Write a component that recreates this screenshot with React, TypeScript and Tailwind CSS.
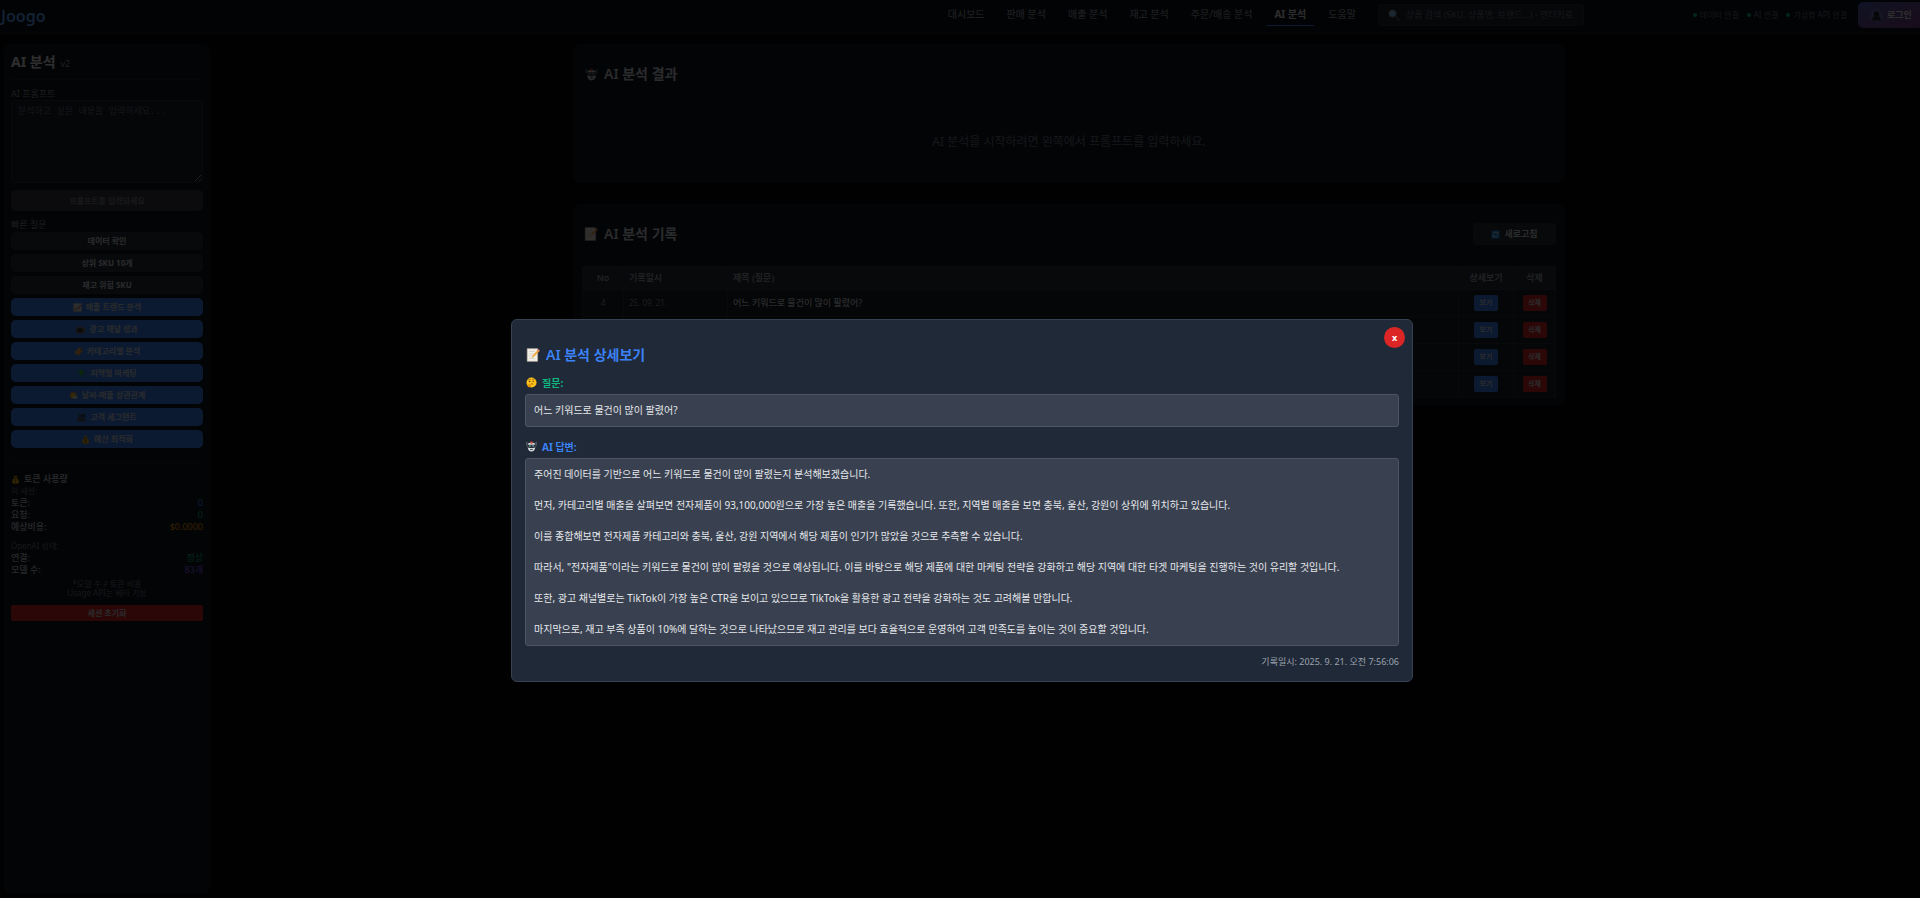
import type { ReactNode } from 'react'

type IconProps = { className?: string }

function Svg({ className = 'size-3', children }: { className?: string; children: ReactNode }) {
  return (
    <svg viewBox="0 0 24 24" className={`shrink-0 ${className}`} aria-hidden="true">
      {children}
    </svg>
  )
}

function MemoIcon({ className }: IconProps) {
  return (
    <Svg className={className}>
      <path d="M2 1h18v22H2z" fill="#f3efe6" stroke="#a8a29a" strokeWidth="1" />
      <path d="M5 6h10M5 10h8M5 14h6M5 18h10" stroke="#cfcbc4" strokeWidth="1.2" />
      <path d="M10 17l1.200-4.200L21 2.500l2.500 2.300L13.800 15.200z" fill="#f2a93b" />
      <path d="M10 17l1.200-4.200 2.600 2.400z" fill="#e8c9a0" />
      <path d="M19.500 4l1.800-2 2.500 2.400-1.800 2z" fill="#e8746a" />
    </Svg>
  )
}

function ThinkingIcon({ className }: IconProps) {
  return (
    <Svg className={className}>
      <circle cx="12" cy="12" r="11" fill="#fcc21b" />
      <circle cx="8" cy="10" r="1.600" fill="#4a3413" />
      <circle cx="15.500" cy="9" r="1.600" fill="#4a3413" />
      <path d="M5 6.500q3-2 5.500-.5M13.500 5q2.500-2 5 0M10 16q3-2.500 6-.5" fill="none" stroke="#6b4a17" strokeWidth="1.500" />
      <path d="M4 22c-1-4 1-6 2.500-6l5-.5c1.500.5 1 2-1 2.300 1.500 1.500.5 4-2.500 4.700z" fill="#e59600" />
    </Svg>
  )
}

function RobotIcon({ className }: IconProps) {
  return (
    <Svg className={className}>
      <path d="M2 2v8M22 2v8" stroke="#8d9499" strokeWidth="1.500" />
      <path d="M5 5q7-3 14 0l1.500 8q-1.500 10-8.500 10T3.500 13z" fill="#d5d9dc" />
      <path d="M10 1h4v5h-4z" fill="#e2453c" />
      <path d="M3.500 8h17v6q-8.500 3-17 0z" fill="#2b3338" />
      <circle cx="8.500" cy="11" r="1.500" fill="#7fe3e8" />
      <circle cx="15.500" cy="11" r="1.500" fill="#7fe3e8" />
      <path d="M9 18.500h6" stroke="#3b4349" strokeWidth="2" />
    </Svg>
  )
}

function ChartIcon({ className }: IconProps) {
  return (
    <Svg className={className}>
      <path d="M1 1h22v22H1z" fill="#e6e7e8" stroke="#9aa0a6" />
      <path d="M8 1v22M16 1v22M1 8h22M1 16h22" stroke="#b5bcc2" />
      <path d="M3 20l6-7 4 3 8-11" fill="none" stroke="#e0453a" strokeWidth="2.600" />
    </Svg>
  )
}

function TvIcon({ className }: IconProps) {
  return (
    <Svg className={className}>
      <path d="M7 1l5 5 5-5" fill="none" stroke="#8a8a8a" strokeWidth="1.600" />
      <rect x="1" y="6" width="22" height="16" rx="2" fill="#7a5b48" />
      <rect x="4" y="9" width="13" height="10" fill="#2d3135" />
      <circle cx="20" cy="11" r="1.300" fill="#d6c9bd" />
    </Svg>
  )
}

function TagIcon({ className }: IconProps) {
  return (
    <Svg className={className}>
      <path d="M13 2l8 1 2 8-12 12L1 14z" fill="#f0a94e" />
      <circle cx="18" cy="7" r="2" fill="#5a3310" />
      <path d="M6 13l5-5M9 17l6-6" stroke="#b56d24" strokeWidth="1.500" />
    </Svg>
  )
}

function GlobeIcon({ className }: IconProps) {
  return (
    <Svg className={className}>
      <circle cx="12" cy="12" r="11" fill="#2487c9" />
      <path d="M5 5q6-5 13-1l1 6-5 3-1 7-4-2-1-6-4-2z" fill="#33b44a" />
    </Svg>
  )
}

function SunCloudIcon({ className }: IconProps) {
  return (
    <Svg className={className}>
      <path d="M11 0l2 4 4-2v5l5 1-3 4 3 4-5 1v5l-5-3-5 3-1-5-5-1 3-4-3-4 5-1V2l4 2z" fill="#f5a623" />
      <circle cx="11" cy="12" r="6" fill="#fdd235" />
      <path d="M11 20q-3-4 2-6 3-4 6 0 5 1 4 6z" fill="#e4eaee" />
    </Svg>
  )
}

function PeopleIcon({ className }: IconProps) {
  return (
    <Svg className={className}>
      <circle cx="8" cy="8" r="5" fill="#4b5058" />
      <circle cx="17" cy="7" r="5" fill="#3a3f46" />
      <path d="M0 22q0-9 8-9 4 0 5 2 2-2 5-2 6 1 6 9z" fill="#4b5058" />
    </Svg>
  )
}

function MoneyBagIcon({ className }: IconProps) {
  return (
    <Svg className={className}>
      <path d="M7 1l5 2 5-2-2 6H9z" fill="#f2b600" />
      <path d="M9 7h6q7 6 6 12-1 4-9 4t-9-4Q2 13 9 7z" fill="#f2b600" />
      <path d="M8 7h8" stroke="#8a5a00" strokeWidth="2" />
      <path d="M15 12q-5-2-5 1t4 2q2 4-5 3M12 10v11" fill="none" stroke="#7a5200" strokeWidth="1.600" />
    </Svg>
  )
}

function RefreshIcon({ className }: IconProps) {
  return (
    <Svg className={className}>
      <rect x="1" y="1" width="22" height="22" rx="2" fill="#1481d4" />
      <path d="M5.500 11a6.500 6.500 0 0 1 12-2.500M18.500 13a6.500 6.500 0 0 1-12 2.500" fill="none" stroke="#e8f4ff" strokeWidth="2.400" />
      <path d="M19.500 4v6h-6zM4.500 20v-6h6z" fill="#e8f4ff" />
    </Svg>
  )
}

function SearchIcon({ className }: IconProps) {
  return (
    <Svg className={className}>
      <path d="M14 14l8 8" stroke="#4a4f55" strokeWidth="4" strokeLinecap="round" />
      <circle cx="9" cy="9" r="7.500" fill="#8cc4e8" stroke="#5d6870" strokeWidth="2" />
    </Svg>
  )
}

function UserIcon({ className }: IconProps) {
  return (
    <Svg className={className}>
      <circle cx="12" cy="12" r="12" fill="#6b6fae" />
      <circle cx="12" cy="9" r="5" fill="#23262e" />
      <path d="M4 21q0-8 8-8t8 8z" fill="#23262e" />
    </Svg>
  )
}

const navItems = ['대시보드', '판매 분석', '매출 분석', '재고 분석', '주문/배송 분석', 'AI 분석', '도움말']
const statuses = ['데이터 연결', 'AI 연결', '기상청 API 연결']
const plainQuestions = ['데이터 확인', '상위 SKU 10개', '재고 위험 SKU']

const analysisQuestions = [
  { label: '매출 트렌드 분석', Icon: ChartIcon },
  { label: '광고 채널 성과', Icon: TvIcon },
  { label: '카테고리별 분석', Icon: TagIcon },
  { label: '지역별 마케팅', Icon: GlobeIcon },
  { label: '날씨-매출 상관관계', Icon: SunCloudIcon },
  { label: '고객 세그먼트', Icon: PeopleIcon },
  { label: '예산 최적화', Icon: MoneyBagIcon },
]

const history = [
  { no: 4, date: '25. 09. 21.', title: '어느 키워드로 물건이 많이 팔렸어?' },
  { no: 3, date: '', title: '' },
  { no: 2, date: '', title: '' },
  { no: 1, date: '', title: '' },
]

const answer = [
  '주어진 데이터를 기반으로 어느 키워드로 물건이 많이 팔렸는지 분석해보겠습니다.',
  '먼저, 카테고리별 매출을 살펴보면 전자제품이 93,100,000원으로 가장 높은 매출을 기록했습니다. 또한, 지역별 매출을 보면 충북, 울산, 강원이 상위에 위치하고 있습니다.',
  '이를 종합해보면 전자제품 카테고리와 충북, 울산, 강원 지역에서 해당 제품이 인기가 많았을 것으로 추측할 수 있습니다.',
  '따라서, "전자제품"이라는 키워드로 물건이 많이 팔렸을 것으로 예상됩니다. 이를 바탕으로 해당 제품에 대한 마케팅 전략을 강화하고 해당 지역에 대한 타겟 마케팅을 진행하는 것이 유리할 것입니다.',
  '또한, 광고 채널별로는 TikTok이 가장 높은 CTR을 보이고 있으므로 TikTok을 활용한 광고 전략을 강화하는 것도 고려해볼 만합니다.',
  '마지막으로, 재고 부족 상품이 10%에 달하는 것으로 나타났으므로 재고 관리를 보다 효율적으로 운영하여 고객 만족도를 높이는 것이 중요할 것입니다.',
]

function Header() {
  return (
    <header className="flex h-[34px] items-start overflow-hidden border-b border-[#161b26] bg-[#0b0f17]">
      <a href="#home" className="ml-px pt-1 text-[16px] leading-6 font-semibold text-[#60a5fa]">
        Joogo
      </a>
      <nav className="ml-auto flex gap-[6px] pt-1">
        {navItems.map((item) => (
          <a
            key={item}
            href={`#${item}`}
            className={
              item === 'AI 분석'
                ? 'border-b border-[#3b82f6] px-2 text-[10px] leading-[21px] font-bold whitespace-nowrap text-gray-200'
                : 'px-2 text-[10px] leading-[21px] font-medium whitespace-nowrap text-[#8b929e]'
            }
          >
            {item}
          </a>
        ))}
      </nav>
      <div className="mt-1 ml-[14px] flex h-[22px] w-[206px] shrink-0 items-center gap-[6px] rounded-[3px] border border-[#2a3040] bg-[#1f2430] px-[9px]">
        <SearchIcon className="size-3" />
        <input
          aria-label="상품 검색"
          placeholder="상품 검색 (SKU, 상품명, 브랜드...) - 엔터키로 검색"
          className="min-w-0 flex-1 bg-transparent text-[9px] leading-4 outline-none placeholder:text-[#6b7280]"
        />
      </div>
      <ul className="ml-[109px] flex gap-2 pt-[5px]">
        {statuses.map((status) => (
          <li key={status} className="flex items-center gap-[3px] text-[8px] leading-5 whitespace-nowrap text-[#6b7280]">
            <span className="size-1 rounded-full bg-[#10b981]" />
            {status}
          </li>
        ))}
      </ul>
      <button className="mt-[2px] -mr-1 ml-[11px] flex h-[26px] w-[66px] shrink-0 items-center gap-1 rounded-[5px] bg-linear-to-br from-[#4f5fb8] to-[#7a3a80] pl-3 text-[9px] font-bold text-gray-200">
        <UserIcon className="size-[13px]" />
        로그인
      </button>
    </header>
  )
}

function StatRow({ label, value, tone }: { label: string; value: string; tone: string }) {
  return (
    <div className="flex justify-between text-[9px] leading-[12px]">
      <dt className="font-medium text-[#c0c5cd]">{label}</dt>
      <dd className={tone}>{value}</dd>
    </div>
  )
}

function Sidebar() {
  return (
    <aside className="ml-1 w-[206px] shrink-0 rounded-lg bg-[#131720] px-[7px] pt-2">
      <h2 className="flex items-baseline gap-[5px] border-b border-[#1e2430] pb-[5px] text-[14px] leading-5 font-bold text-gray-200">
        AI 분석 <small className="text-[9px] font-normal text-gray-400">v2</small>
      </h2>
      <label htmlFor="prompt" className="mt-2 block text-[9px] leading-[12px] text-[#8b929e]">
        AI 프롬프트
      </label>
      <textarea
        id="prompt"
        placeholder="분석하고 싶은 내용을 입력하세요..."
        className="block h-[83px] w-full rounded-[3px] border border-[#262d3a] bg-[#191e29] px-[6px] py-1 font-['Liberation_Mono','Noto_Sans_CJK_KR',monospace] text-[9px] leading-[14px] placeholder:text-[#6b7280]"
      />
      <button disabled className="mt-[7px] h-[21px] w-full rounded-[5px] bg-[#383b42] text-[8px] font-bold text-[#777c86]">
        프롬프트를 입력하세요
      </button>
      <h3 className="mt-2 text-[9px] leading-[12px] text-[#8b929e]">빠른 질문</h3>
      <div className="mt-px flex flex-col gap-1">
        {plainQuestions.map((label) => (
          <button key={label} className="h-[18px] rounded-[5px] border border-[#303540] bg-[#2b2f38] text-[8px] font-bold text-[#d1d5db]">
            {label}
          </button>
        ))}
        {analysisQuestions.map(({ label, Icon }) => (
          <button key={label} className="flex h-[18px] items-center justify-center gap-1 rounded-[5px] bg-[#3b82f6] text-[8px] font-bold text-[#d1d5db]">
            <Icon className="size-[9px]" />
            {label}
          </button>
        ))}
      </div>
      <section className="mt-[14px] border-t border-[#1e2430] pt-[10px]">
        <h3 className="flex items-center gap-1 text-[9px] leading-[12px] font-bold text-[#b4b9c2]">
          <MoneyBagIcon className="size-[9px]" />
          토큰 사용량
        </h3>
        <p className="text-[8px] leading-[12px] text-[#6b7280]">이 세션:</p>
        <dl>
          <StatRow label="토큰:" value="0" tone="text-[#3b82f6]" />
          <StatRow label="요청:" value="0" tone="text-[#10b981]" />
          <StatRow label="예상비용:" value="$0.0000" tone="text-[#f59e0b]" />
        </dl>
        <p className="mt-[7px] text-[8px] leading-[12px] text-[#6b7280]">OpenAI 상태:</p>
        <dl>
          <StatRow label="연결:" value="정상" tone="text-[#10b981]" />
          <StatRow label="모델 수:" value="83개" tone="text-[#8b5cf6]" />
        </dl>
        <p className="mt-[3px] text-center text-[8px] leading-[9px] text-[#6b7280]">
          *모델 수 ≠ 토큰 비용
          <br />
          Usage API는 베타 기능
        </p>
        <button className="mt-2 h-4 w-full rounded-[2px] bg-[#dc2626] text-[8px] font-bold text-[#d1d5db]">세션 초기화</button>
      </section>
    </aside>
  )
}

function ResultCard() {
  return (
    <section className="h-[139px] rounded-lg bg-[#131720] px-3 pt-5">
      <h2 className="flex items-center gap-[6px] text-[14px] leading-5 font-semibold text-[#d1d5db]">
        <RobotIcon className="size-[13px]" />
        AI 분석 결과
      </h2>
      <p className="mt-[49px] text-center text-[12px] leading-[18px] text-[#6b7280]">AI 분석을 시작하려면 왼쪽에서 프롬프트를 입력하세요.</p>
    </section>
  )
}

function HistoryCard() {
  return (
    <section className="mt-[21px] rounded-lg bg-[#131720] px-[9px] pb-2">
      <div className="flex items-center justify-between pt-[19px] pb-[21px]">
        <h2 className="flex items-center gap-[6px] pl-[2px] text-[14px] leading-5 font-semibold text-[#d1d5db]">
          <MemoIcon className="size-[14px]" />
          AI 분석 기록
        </h2>
        <button className="flex h-[22px] w-[83px] items-center justify-center gap-1 rounded-[3px] bg-[#2b2f38] text-[9px] font-semibold text-[#d1d5db]">
          <RefreshIcon className="size-[9px]" />
          새로고침
        </button>
      </div>
      <table className="w-full table-fixed border-collapse text-left text-[9px] leading-[12px]">
        <colgroup>
          <col className="w-[41px]" />
          <col className="w-[104px]" />
          <col />
          <col className="w-[55px]" />
          <col className="w-[42px]" />
        </colgroup>
        <thead className="bg-[#2b2f38] text-[#9ca3af]">
          <tr className="h-[23px] *:border *:border-[#303540] *:font-semibold">
            <th className="text-center">No</th>
            <th className="px-[5px]">기록일시</th>
            <th className="px-[5px]">제목 (질문)</th>
            <th className="text-center">상세보기</th>
            <th className="text-center">삭제</th>
          </tr>
        </thead>
        <tbody className="bg-[#191e27]">
          {history.map((row) => (
            <tr key={row.no} className="h-[27px] *:border *:border-[#2a2f3a]">
              <td className="text-center text-[#8b929e]">{row.no}</td>
              <td className="px-[5px] text-[8px] text-[#8b929e]">{row.date}</td>
              <td className="px-[5px] font-medium text-[#d1d5db]">{row.title}</td>
              <td className="text-center">
                <button className="h-4 w-6 rounded-[2px] bg-[#3b82f6] align-middle text-[7px] font-semibold text-[#d1d5db]">보기</button>
              </td>
              <td className="text-center">
                <button className="h-4 w-6 rounded-[2px] bg-[#dc2626] align-middle text-[7px] font-semibold text-[#d1d5db]">삭제</button>
              </td>
            </tr>
          ))}
        </tbody>
      </table>
    </section>
  )
}

function DetailDialog() {
  return (
    <div className="fixed inset-0 flex items-center justify-center bg-black/80 pt-[102px] pl-1">
      <div
        role="dialog"
        aria-modal="true"
        aria-labelledby="detail-title"
        className="relative w-full max-w-[902px] rounded-md border border-[#374151] bg-[#202937] px-[13px] pt-[25px] pb-3"
      >
        <button
          aria-label="닫기"
          className="absolute top-[7px] right-[7px] size-[21px] rounded-full bg-[#dc2626] text-[9px] leading-none font-bold text-white"
        >
          x
        </button>
        <h2 id="detail-title" className="flex items-center gap-[6px] pl-px text-[14px] leading-5 font-semibold text-[#3b82f6]">
          <MemoIcon className="size-[14px]" />
          AI 분석 상세보기
        </h2>
        <h3 className="mt-[11px] flex items-center gap-[5px] pl-px text-[10px] leading-[14px] font-bold text-[#10b981]">
          <ThinkingIcon className="size-[11px]" />
          질문:
        </h3>
        <p className="mt-1 rounded-[3px] border border-[#4b5563] bg-[#394150] p-2 text-[10px] leading-[15px] text-[#e5e7eb]">
          어느 키워드로 물건이 많이 팔렸어?
        </p>
        <h3 className="mt-[13px] flex items-center gap-[5px] pl-px text-[10px] leading-[14px] font-bold text-[#3b82f6]">
          <RobotIcon className="size-[11px]" />
          AI 답변:
        </h3>
        <div className="mt-1 flex flex-col gap-4 rounded-[3px] border border-[#4b5563] bg-[#394150] p-2 text-[10px] leading-[15px] text-[#e5e7eb]">
          {answer.map((line) => (
            <p key={line}>{line}</p>
          ))}
        </div>
        <p className="mt-[9px] text-right text-[9px] leading-[14px] text-[#9ca3af]">기록일시: 2025. 9. 21. 오전 7:56:06</p>
      </div>
    </div>
  )
}

export default function App() {
  return (
    <div className="flex min-h-screen flex-col bg-[#05080c] font-['Noto_Sans','Noto_Sans_CJK_KR',sans-serif] text-gray-200">
      <Header />
      <div className="flex flex-1 pt-[10px] pb-1">
        <Sidebar />
        <main className="flex-1 pl-2">
          <div className="mx-auto max-w-[992px]">
            <ResultCard />
            <HistoryCard />
          </div>
        </main>
      </div>
      <DetailDialog />
    </div>
  )
}
